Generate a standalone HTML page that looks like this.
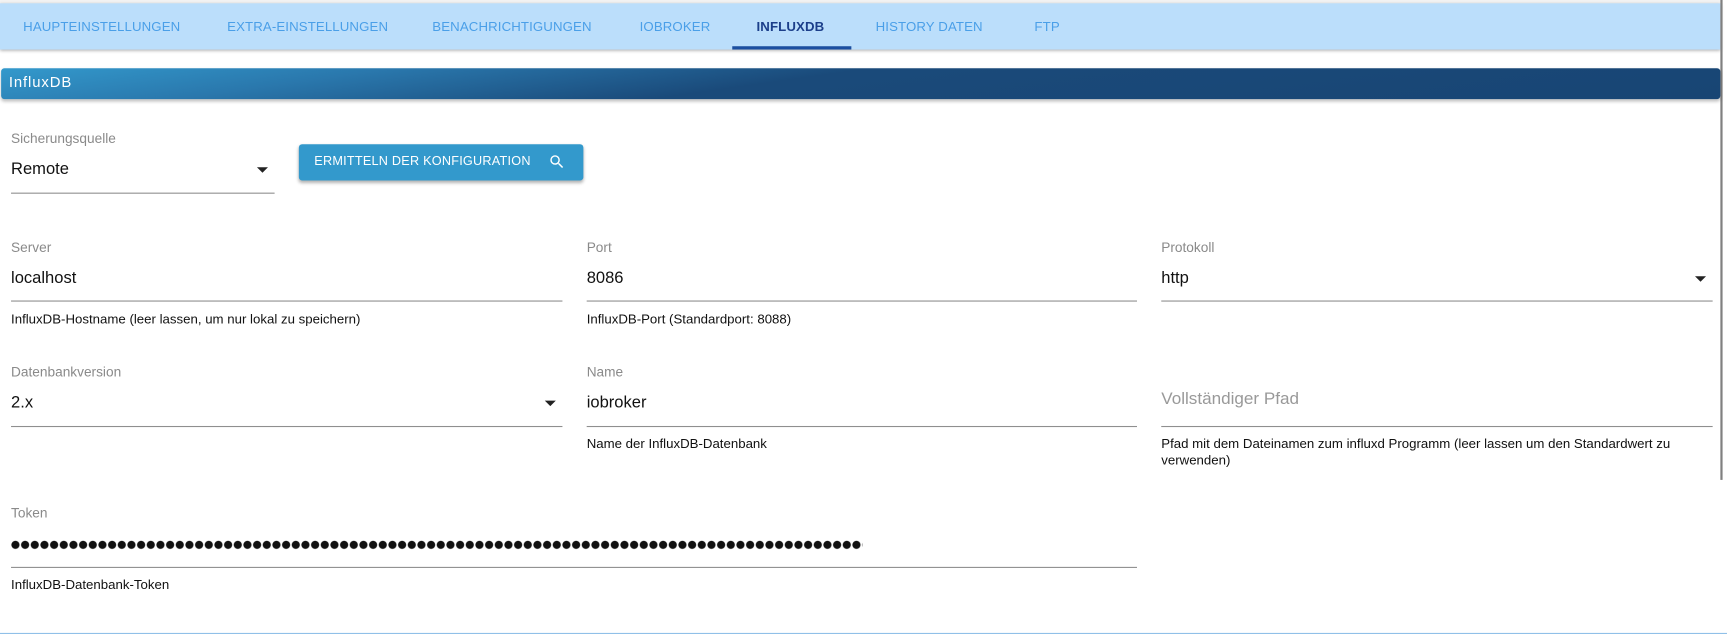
<!DOCTYPE html>
<html><head><meta charset="utf-8"><style>
html,body{margin:0;padding:0;background:#fff;overflow:hidden;width:1727px;height:634px}
#w{position:absolute;left:0;top:0;width:1566px;height:576px;transform:scale(1.1028,1.1007);transform-origin:0 0;font-family:"Liberation Sans",sans-serif}
.a{position:absolute;white-space:nowrap}
.tab{position:absolute;top:17px;font-size:12px;color:#4a9fe8;letter-spacing:0.1px}
.lbl{font-size:12.4px;color:#8a8a8a}
.val{font-size:15px;color:#111}
.ul{position:absolute;height:1px;background:#8f8f8f}
.hp{font-size:12px;color:#111}
.arr{position:absolute;width:0;height:0;border-left:5px solid transparent;border-right:5px solid transparent;border-top:5px solid #222}
</style></head><body><div id="w">
<div class="a" style="left:0;top:0;width:1560px;height:3px;background:#f3f3f3"></div>
<div class="a" style="left:0;top:3px;width:1560px;height:42px;background:#bbdefb;box-shadow:0 1px 3px rgba(0,0,0,.35)"></div>
<div class="tab" style="left:21px">HAUPTEINSTELLUNGEN</div>
<div class="tab" style="left:206px">EXTRA-EINSTELLUNGEN</div>
<div class="tab" style="left:392px">BENACHRICHTIGUNGEN</div>
<div class="tab" style="left:580px">IOBROKER</div>
<div class="tab" style="left:686px;color:#1c3f8a;font-weight:bold">INFLUXDB</div>
<div class="tab" style="left:794px">HISTORY DATEN</div>
<div class="tab" style="left:938px">FTP</div>
<div class="a" style="left:664px;top:42px;width:108px;height:3px;background:#1c4fa0"></div>
<div class="a" style="left:1560px;top:0;width:2px;height:436px;background:#808080"></div>
<div class="a" style="left:1px;top:62px;width:1559px;height:28px;border-radius:3px;background:linear-gradient(172deg,#3399cc 0%,#2a78ad 20%,#1a4a7a 45%,#184574 100%);box-shadow:0 2px 3px rgba(0,0,0,.25)"></div>
<div class="a" style="left:8px;top:67px;font-size:13.5px;color:#fff;letter-spacing:0.8px">InfluxDB</div>

<div class="a lbl" style="left:10px;top:119px">Sicherungsquelle</div>
<div class="a val" style="left:10px;top:145px">Remote</div>
<div class="arr" style="left:233px;top:152px"></div>
<div class="ul" style="left:10px;top:175px;width:239px"></div>
<div class="a" style="left:271px;top:131px;width:258px;height:33px;background:#3399cc;border-radius:3px;box-shadow:0 2px 3px rgba(0,0,0,.3)"></div>
<div class="a" style="left:285px;top:141px;font-size:11.5px;color:#fff;letter-spacing:0.2px">ERMITTELN DER KONFIGURATION</div>
<svg class="a" style="left:497px;top:139px" width="16" height="16" viewBox="0 0 24 24"><path fill="#fff" d="M15.5 14h-.79l-.28-.27A6.47 6.47 0 0 0 16 9.5 6.5 6.5 0 1 0 9.5 16c1.61 0 3.09-.59 4.230-1.57l.27.28v.79l5 4.99L20.49 19l-4.99-5zm-6 0C7.01 14 5 11.990 5 9.5S7.01 5 9.5 5 14 7.01 14 9.5 11.99 14 9.5 14z"/></svg>

<div class="a lbl" style="left:10px;top:218px">Server</div>
<div class="a val" style="left:10px;top:244px">localhost</div>
<div class="ul" style="left:10px;top:273px;width:500px"></div>
<div class="a hp" style="left:10px;top:283px">InfluxDB-Hostname (leer lassen, um nur lokal zu speichern)</div>
<div class="a lbl" style="left:532px;top:218px">Port</div>
<div class="a val" style="left:532px;top:244px">8086</div>
<div class="ul" style="left:532px;top:273px;width:499px"></div>
<div class="a hp" style="left:532px;top:283px">InfluxDB-Port (Standardport: 8088)</div>
<div class="a lbl" style="left:1053px;top:218px">Protokoll</div>
<div class="a val" style="left:1053px;top:244px">http</div>
<div class="arr" style="left:1537px;top:251px"></div>
<div class="ul" style="left:1053px;top:273px;width:500px"></div>

<div class="a lbl" style="left:10px;top:331px">Datenbankversion</div>
<div class="a val" style="left:10px;top:357px">2.x</div>
<div class="arr" style="left:494px;top:364px"></div>
<div class="ul" style="left:10px;top:387px;width:500px"></div>
<div class="a lbl" style="left:532px;top:331px">Name</div>
<div class="a val" style="left:532px;top:357px">iobroker</div>
<div class="ul" style="left:532px;top:387px;width:499px"></div>
<div class="a hp" style="left:532px;top:396px">Name der InfluxDB-Datenbank</div>
<div class="a" style="left:1053px;top:354px;font-size:15.5px;color:#999">Vollständiger Pfad</div>
<div class="ul" style="left:1053px;top:387px;width:500px"></div>
<div class="a hp" style="left:1053px;top:396px;line-height:15px">Pfad mit dem Dateinamen zum influxd Programm (leer lassen um den Standardwert zu<br>verwenden)</div>

<div class="a lbl" style="left:10px;top:459px">Token</div>
<div class="a" style="left:10px;top:491px;width:772px;height:8px;background:radial-gradient(circle at 4px 4px,#111 3.4px,transparent 3.9px) 0 0/8.77px 8px repeat-x"></div>
<div class="ul" style="left:10px;top:515px;width:1021px"></div>
<div class="a hp" style="left:10px;top:524px">InfluxDB-Datenbank-Token</div>
<div class="a" style="left:0;top:575px;width:1566px;height:1px;background:#90c0e8"></div>
</div></body></html>
